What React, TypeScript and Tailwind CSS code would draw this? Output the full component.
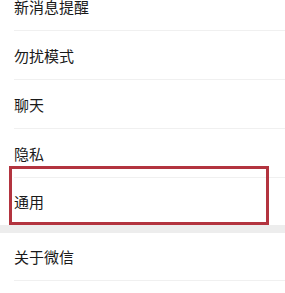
const font = { fontFamily: '"Noto Sans CJK SC", "Noto Sans", sans-serif' };

const Row = ({ title, divider = true, height = "h-[48px]" }: { title: string; divider?: boolean; height?: string }) => (
  <div>
    <div className={`${height} flex items-center pl-[14px] text-[15px] text-[#1a1a1a]`}>
      <span className="leading-none">{title}</span>
    </div>
    {divider && <div className="ml-[14px] h-px bg-[#f0f0f0]" />}
  </div>
);

const App = () => {
  return (
    <div className="relative w-[285px] h-[293px] overflow-hidden bg-white" style={font}>
      <div className="-mt-[18px]">
        <Row title="新消息提醒" />
        <Row title="勿扰模式" />
        <Row title="聊天" />
        <Row title="隐私" />
        <Row title="通用" divider={false} height="h-[47px]" />
        <div className="h-[8px] bg-[#ededed]" />
        <Row title="关于微信" height="h-[47px]" />
      </div>

      {/* highlight annotation */}
      <div className="absolute left-[9px] top-[166px] w-[260px] h-[59px] border-[3px] border-[#b3343f]" />
    </div>
  );
};

export default App;
